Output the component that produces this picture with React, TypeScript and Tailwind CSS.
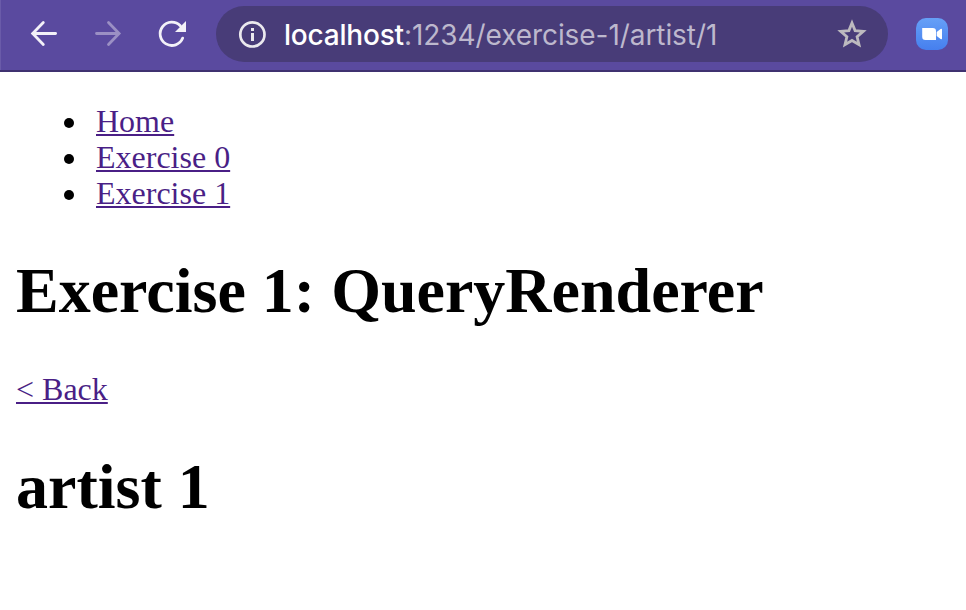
const link = "text-[#4a1f86] underline decoration-2 underline-offset-2";
const item = "flex items-center before:mr-[22px] before:mt-[3px] before:size-[10px] before:rounded-full before:bg-black before:content-['']";

function Toolbar() {
  return (
    <header className="flex h-[72px] items-start border-b-2 border-[#3f3170] bg-[#5a4a9f] pt-[6px] font-['Inter',sans-serif]">
      <div className="-mt-[6px] h-[70px] w-px bg-[#6a5ba9]" />
      <div className="flex h-14 w-[215px] items-center pl-[27px]">
        <svg width="32" height="32" viewBox="0 0 32 32" fill="none" stroke="#f3f1f8" strokeWidth="2.8" strokeLinecap="round">
          <path d="M27.6 15.5H5" />
          <path d="M15.3 4.5L4.7 15.5l10.6 11" />
        </svg>
        <svg className="ml-8" width="32" height="32" viewBox="0 0 32 32" fill="none" stroke="#9b90c4" strokeWidth="2.8" strokeLinecap="round">
          <path d="M4.5 15.5H27M16.5 4.5l10.6 11-10.6 11" />
        </svg>
        <svg className="ml-8" width="32" height="32" viewBox="0 0 32 32" fill="none" stroke="#f3f1f8" strokeWidth="2.8" strokeLinecap="round">
          <path d="M26.7 20.1A11.7 11.7 0 1 1 24.3 7.7" />
          <path d="M30 3v11H19z" fill="#f3f1f8" stroke="none" />
        </svg>
      </div>
      <div className="flex h-14 w-[672px] items-center rounded-full bg-[#483c78] pl-[22px] pr-[20px]">
        <svg width="28" height="28" viewBox="0 0 28 28" fill="none" stroke="#ebe9ee" strokeWidth="2.7">
          <circle cx="14.4" cy="14.4" r="12.1" />
          <path d="M14.5 13v8M14.5 8v3" strokeWidth="3" />
        </svg>
        <span className="ml-[18px] flex-1 whitespace-nowrap pt-px text-[28px] leading-8 tracking-[-0.07px] text-[#bdb8cd]">
          <span className="font-medium tracking-[-0.2px] text-white">localhost</span>:1234/exercise-1/artist/1
        </span>
        <svg width="32" height="32" viewBox="0 0 32 32" fill="none" stroke="#bdbabf" strokeWidth="2.8">
          <path d="M16 5l3.1 7.6 8.2.7-6.2 5.4 1.9 8-7-4.2-7 4.2 1.9-8-6.2-5.4 8.2-.7z" />
        </svg>
      </div>
      <div className="ml-7 mt-3 flex size-8 items-center justify-center rounded-[10px] bg-linear-to-b from-[#66a0f7] to-[#467fee]">
        <svg width="32" height="32" viewBox="0 0 32 32" fill="#fff">
          <path d="M6.2 10h10.6q3.2 0 3.2 3.2V22H9.4q-3.2 0-3.2-3.2zM20.7 14l3.9-3q1.4-.8 1.4.5v9q0 1.3-1.4.5l-3.9-3z" />
        </svg>
      </div>
    </header>
  );
}

export default function App() {
  return (
    <div className="h-[610px] w-[966px] overflow-hidden bg-white font-['Liberation_Serif',serif] text-[32px] leading-9 text-black">
      <Toolbar />
      <main className="px-4 pt-[31px]">
        <ul className="pl-12">
          <li className={item}><a className={link}>Home</a></li>
          <li className={item}><a className={link}>Exercise 0</a></li>
          <li className={item}><a className={link}>Exercise 1</a></li>
        </ul>
        <h1 className="mt-[43px] text-[64px] font-bold leading-[74px]">Exercise 1: QueryRenderer</h1>
        <p className="mt-[43px]"><a className={link}>&lt; Back</a></p>
        <h1 className="mt-[43px] text-[64px] font-bold leading-[74px]">artist 1</h1>
      </main>
    </div>
  );
}
